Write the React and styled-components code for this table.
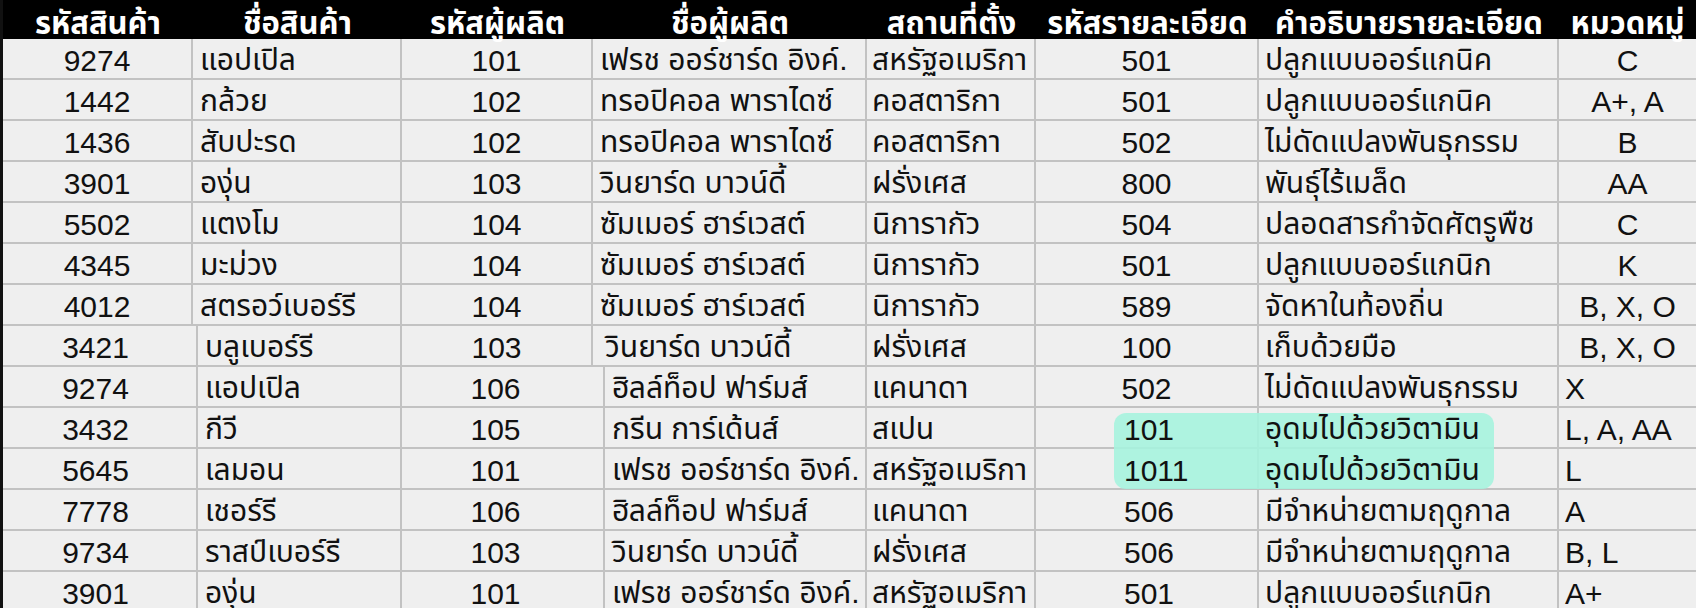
import React from "react";
import styled, { createGlobalStyle } from "styled-components";

const GlobalStyle = createGlobalStyle`
  html, body {
    margin: 0;
    padding: 0;
    background: #efefef;
    overflow: hidden;
  }
  body {
    font-family: "Liberation Sans", "Noto Sans Thai", "Tahoma", "DejaVu Sans", sans-serif;
  }
`;

const layouts = {
  a: "190px 209px 191px 274px 169px 223px 300px 1fr",
  b: "195px 204px 191px 274px 169px 223px 300px 1fr",
  c: "195px 204px 203px 262px 169px 223px 300px 1fr",
};

const Sheet = styled.div`
  position: relative;
  width: 1696px;
  height: 608px;
  overflow: hidden;
  border-left: 3px solid #111;
  box-sizing: border-box;
  background: #efefef;
  color: #111;
`;

const HeaderRow = styled.div`
  display: grid;
  grid-template-columns: ${layouts.a};
  height: 39px;
  background: #000;
  margin-left: -3px;
  padding-left: 3px;
`;

const HeadCell = styled.div`
  display: flex;
  align-items: center;
  justify-content: center;
  padding-top: 1px;
  color: #fff;
  font-weight: 700;
  font-size: 31px;
  white-space: nowrap;
`;

const Body = styled.div`
  display: flex;
  flex-direction: column;
`;

const Row = styled.div`
  display: grid;
  grid-template-columns: ${(p) => layouts[p.$layout]};
  height: 39px;
  flex: none;
  border-bottom: 2px solid #c2c2c2;
`;

const Cell = styled.div`
  display: flex;
  align-items: center;
  justify-content: ${(p) => (p.$align === "center" ? "center" : "flex-start")};
  padding-left: ${(p) => (p.$align === "center" ? 0 : p.$pad ?? 7)}px;
  padding-right: ${(p) => p.$padRight ?? 0}px;
  padding-top: 4px;
  border-right: ${(p) => (p.$last ? "none" : "2px solid #c2c2c2")};
  font-size: 30px;
  white-space: nowrap;
  overflow: hidden;
`;

const Txt = styled.span`
  position: relative;
  z-index: 1;
`;

const Highlight = styled.div`
  position: absolute;
  left: 1111px;
  top: 413px;
  width: 380px;
  height: 76px;
  border-radius: 12px;
  background: rgba(165, 244, 222, 0.88);
  z-index: 0;
`;

const headers = [
  "รหัสสินค้า",
  "ชื่อสินค้า",
  "รหัสผู้ผลิต",
  "ชื่อผู้ผลิต",
  "สถานที่ตั้ง",
  "รหัสรายละเอียด",
  "คำอธิบายรายละเอียด",
  "หมวดหมู่",
];

const rows = [
  ["9274", "แอปเปิล", "101", "เฟรช ออร์ชาร์ด อิงค์.", "สหรัฐอเมริกา", "501", "ปลูกแบบออร์แกนิค", "C"],
  ["1442", "กล้วย", "102", "ทรอปิคอล พาราไดซ์", "คอสตาริกา", "501", "ปลูกแบบออร์แกนิค", "A+, A"],
  ["1436", "สับปะรด", "102", "ทรอปิคอล พาราไดซ์", "คอสตาริกา", "502", "ไม่ดัดแปลงพันธุกรรม", "B"],
  ["3901", "องุ่น", "103", "วินยาร์ด บาวน์ดี้", "ฝรั่งเศส", "800", "พันธุ์ไร้เมล็ด", "AA"],
  ["5502", "แตงโม", "104", "ซัมเมอร์ ฮาร์เวสต์", "นิการากัว", "504", "ปลอดสารกำจัดศัตรูพืช", "C"],
  ["4345", "มะม่วง", "104", "ซัมเมอร์ ฮาร์เวสต์", "นิการากัว", "501", "ปลูกแบบออร์แกนิก", "K"],
  ["4012", "สตรอว์เบอร์รี", "104", "ซัมเมอร์ ฮาร์เวสต์", "นิการากัว", "589", "จัดหาในท้องถิ่น", "B, X, O"],
  ["3421", "บลูเบอร์รี", "103", "วินยาร์ด บาวน์ดี้", "ฝรั่งเศส", "100", "เก็บด้วยมือ", "B, X, O"],
  ["9274", "แอปเปิล", "106", "ฮิลล์ท็อป ฟาร์มส์", "แคนาดา", "502", "ไม่ดัดแปลงพันธุกรรม", "X"],
  ["3432", "กีวี", "105", "กรีน การ์เด้นส์", "สเปน", "101", "อุดมไปด้วยวิตามิน", "L, A, AA"],
  ["5645", "เลมอน", "101", "เฟรช ออร์ชาร์ด อิงค์.", "สหรัฐอเมริกา", "1011", "อุดมไปด้วยวิตามิน", "L"],
  ["7778", "เชอร์รี", "106", "ฮิลล์ท็อป ฟาร์มส์", "แคนาดา", "506", "มีจำหน่ายตามฤดูกาล", "A"],
  ["9734", "ราสป์เบอร์รี", "103", "วินยาร์ด บาวน์ดี้", "ฝรั่งเศส", "506", "มีจำหน่ายตามฤดูกาล", "B, L"],
  ["3901", "องุ่น", "101", "เฟรช ออร์ชาร์ด อิงค์.", "สหรัฐอเมริกา", "501", "ปลูกแบบออร์แกนิก", "A+"],
];

function layoutFor(i) {
  if (i < 7) return "a";
  if (i === 7) return "b";
  return "c";
}

function cellSpec(i, c) {
  const lower = i >= 9;
  const layout = layoutFor(i);
  switch (c) {
    case 0:
      return { align: "center", padRight: layout === "a" ? 0 : 8 };
    case 2:
      return { align: "center", padRight: layout === "c" ? 14 : 0 };
    case 1:
      return { align: "left", pad: 7 };
    case 3:
      return { align: "left", pad: i === 7 ? 12 : 7 };
    case 4:
      return { align: "left", pad: 5 };
    case 5:
      return lower ? { align: "left", pad: 88 } : { align: "center" };
    case 6:
      return { align: "left", pad: 6 };
    case 7:
      return i >= 8 ? { align: "left", pad: 6 } : { align: "center" };
    default:
      return { align: "center" };
  }
}

export default function App() {
  return (
    <>
      <GlobalStyle />
      <Sheet>
        <HeaderRow>
          {headers.map((h) => (
            <HeadCell key={h}>{h}</HeadCell>
          ))}
        </HeaderRow>
        <Body>
          {rows.map((r, i) => (
            <Row key={i} $layout={layoutFor(i)}>
              {r.map((v, c) => {
                const s = cellSpec(i, c);
                return (
                  <Cell
                    key={c}
                    $align={s.align}
                    $pad={s.pad}
                    $padRight={s.padRight}
                    $last={c === 7}
                  >
                    <Txt>{v}</Txt>
                  </Cell>
                );
              })}
            </Row>
          ))}
        </Body>
        <Highlight />
      </Sheet>
    </>
  );
}
